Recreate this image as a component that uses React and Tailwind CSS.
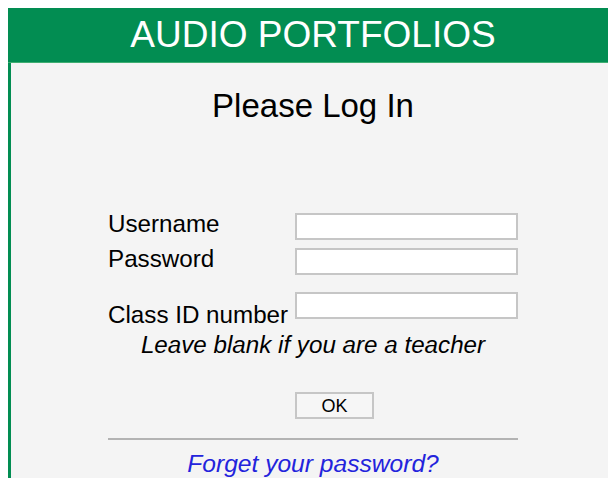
export default function App() {
  const label = "text-[24.2px] leading-none text-black";
  const field =
    "h-[27px] w-[223px] border-2 border-[#c6c6c6] bg-white px-1 text-[16px] outline-none";

  return (
    <div
      className="h-[478px] w-[608px] overflow-hidden bg-white pl-2 pt-2"
      style={{ fontFamily: '"Liberation Sans", Arial, sans-serif' }}
    >
      <div className="w-[610px]">
        {/* banner */}
        <div className="flex h-[55px] items-center justify-center border-b border-[#3fae72] bg-[#028d52] pb-[2px] text-[37px] leading-none text-white">
          AUDIO PORTFOLIOS
        </div>

        <div className="h-[420px] border-l-[3px] border-[#028d52] bg-[#f4f4f4] pr-[3px]">
          <h1 className="pt-[26px] text-center text-[33px] font-normal leading-none text-black">
            Please Log In
          </h1>

          <form className="mx-auto mt-[91px] w-[410px]">
            <div className="flex items-start">
              <label className={`${label} w-[187px] -mt-px`}>Username</label>
              <input type="text" className={field} />
            </div>
            <div className="mt-[8px] flex items-start">
              <label className={`${label} w-[187px] -mt-px`}>Password</label>
              <input type="password" className={field} />
            </div>
            <div className="mt-[17px] flex items-start">
              <label className={`${label} w-[187px] mt-[11px]`}>
                Class ID number
              </label>
              <input type="text" className={field} />
            </div>
            <p className="mt-[6px] text-center text-[24.2px] italic leading-none text-black">
              Leave blank if you are a teacher
            </p>

            <div className="mt-[35px] pl-[187px]">
              <button
                type="button"
                className="h-[27px] w-[79px] border-2 border-[#c6c6c6] bg-[#f6f6f6] text-[18px] leading-none text-black"
              >
                OK
              </button>
            </div>

            <hr className="mt-[19px] border-0 border-t-2 border-[#b3b3b3]" />

            <div className="mt-[12px] text-center">
              <a
                href="#"
                className="text-[24.6px] italic leading-none text-[#2323dc]"
              >
                Forget your password?
              </a>
            </div>
          </form>
        </div>
      </div>
    </div>
  );
}
